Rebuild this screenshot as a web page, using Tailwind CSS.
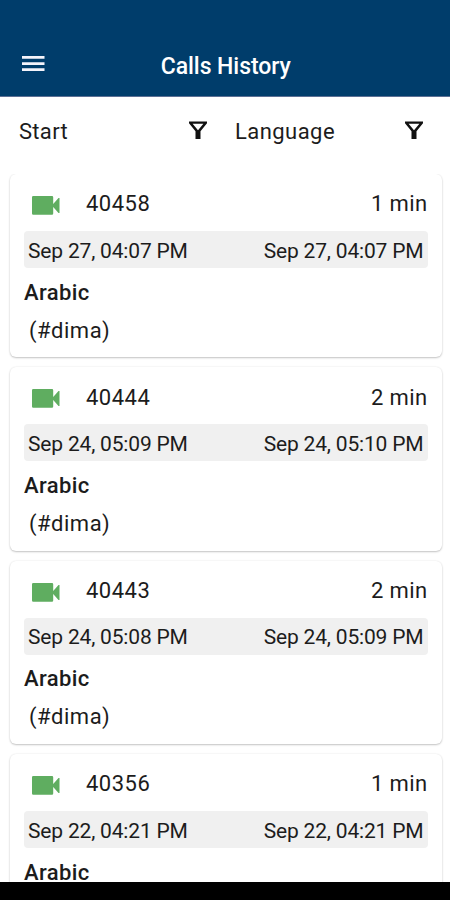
<!DOCTYPE html>
<html lang="en">
<head>
<meta charset="utf-8">
<title>Calls History</title>
<script src="https://cdn.jsdelivr.net/npm/@tailwindcss/browser@4"></script>
</head>
<body class="bg-white">
<div class="flex h-[900px] w-[450px] flex-col overflow-hidden bg-white font-[Roboto,sans-serif] text-[#1c1c1c]">
  <header class="grid h-[97px] shrink-0 grid-cols-[1fr_auto_1fr] items-center border-b border-[#5b6f94] bg-[#003d6b] pt-[34px] pl-[21.5px] text-white">
    <svg class="-mt-[3px] h-[17px] w-[23px]" viewBox="0 0 23 17" fill="#f4f4fb"><path d="M0 1h22.500v2.700H0zM0 7.200h22.500v2.700H0zM0 13.300h22.500v2.700H0z"/></svg>
    <h1 class="pt-[4px] pr-[20px] text-[23px] leading-[28px] font-medium tracking-[-0.05px] whitespace-nowrap">Calls History</h1>
  </header>
  <div class="flex h-[77px] shrink-0 items-start pt-[21px] text-[22px] leading-[28px]">
    <div class="flex w-[216px] items-center justify-between pr-[8px] pl-[19px]">
      <span class="tracking-[0.3px]">Start</span>
      <svg class="-mt-[4px] h-[20px] w-[20px]" viewBox="0 0 20 20" fill="#111" fill-rule="evenodd"><path d="M1 1.500h18v1.700L12.500 11.200V19h-5v-7.800L1 3.200zM4.600 3.800L10 10.300l5.400-6.500z"/></svg>
    </div>
    <div class="flex w-[216px] items-center justify-between pr-[8px] pl-[19px]">
      <span class="tracking-[0.45px]">Language</span>
      <svg class="-mt-[4px] h-[20px] w-[20px]" viewBox="0 0 20 20" fill="#111" fill-rule="evenodd"><path d="M1 1.500h18v1.700L12.500 11.200V19h-5v-7.800L1 3.200zM4.600 3.800L10 10.300l5.400-6.500z"/></svg>
    </div>
  </div>
  <main id="calls" class="flex min-h-0 flex-1 flex-col gap-[10px] overflow-hidden px-[10px]"></main>
  <footer class="h-[18px] shrink-0 bg-black"></footer>
</div>
<script>
const calls = [
  ['40458', '1 min', 'Sep 27, 04:07 PM', 'Sep 27, 04:07 PM', '(#dima)'],
  ['40444', '2 min', 'Sep 24, 05:09 PM', 'Sep 24, 05:10 PM', '(#dima)'],
  ['40443', '2 min', 'Sep 24, 05:08 PM', 'Sep 24, 05:09 PM', '(#dima)'],
  ['40356', '1 min', 'Sep 22, 04:21 PM', 'Sep 22, 04:21 PM', ''],
];
document.getElementById('calls').innerHTML = calls.map(([id, length, start, end, caller]) => `
  <article class="h-[183.400px] w-[431.500px] shrink-0 rounded-[6px] bg-white pr-[14px] pl-[14px] shadow-[0_1px_2px_rgba(0,0,0,0.22),0_0_2px_rgba(0,0,0,0.08)]">
    <div class="flex h-[57px] items-center pt-[3.500px] pl-[8px] text-[22px] leading-[28px]">
      <svg class="mt-[2.500px] h-[19px] w-[28px]" viewBox="0 0 28 19" fill="#5fad60"><path d="M1.200 0h18.800q1.200 0 1.200 1.200V8L26.500 2h1v15h-1L21.200 11v6.600q0 1.200-1.200 1.200H1.200Q0 18.800 0 17.600V1.200Q0 0 1.200 0z"/></svg>
      <span class="ml-[26px] tracking-[0.5px]">${id}</span>
      <span class="ml-auto tracking-[0.4px]">${length}</span>
    </div>
    <div class="flex h-[37px] items-center justify-between rounded-[4px] bg-[#f0f0f0] px-[4px] pt-[2px] text-[21px] leading-[28px] tracking-[-0.18px]">
      <span>${start}</span><span>${end}</span>
    </div>
    <div class="pt-[10.500px] text-[22px] leading-[28px] font-medium tracking-[0.4px]">Arabic</div>
    <div class="pt-[10px] pl-[5px] text-[22px] leading-[28px] tracking-[0.5px]">${caller}</div>
  </article>`).join('');
</script>
</body>
</html>
